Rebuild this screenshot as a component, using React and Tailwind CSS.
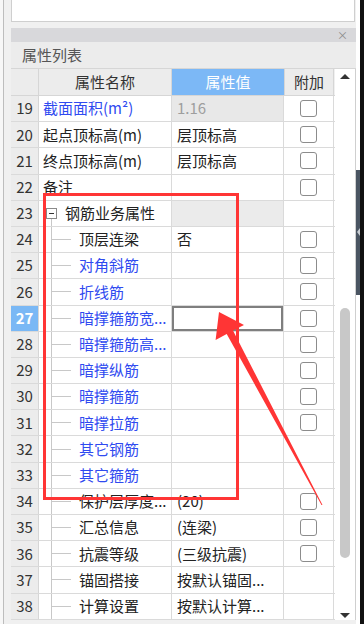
import React from "react";

const rows = [
  { n: 19, name: "截面面积(m²)", blue: true, value: "1.16", gray: true, cb: true },
  { n: 20, name: "起点顶标高(m)", value: "层顶标高", cb: true },
  { n: 21, name: "终点顶标高(m)", value: "层顶标高", cb: true },
  { n: 22, name: "备注", value: "", cb: true },
  { n: 23, name: "钢筋业务属性", group: true },
  { n: 24, name: "顶层连梁", value: "否", cb: true, child: true },
  { n: 25, name: "对角斜筋", blue: true, cb: true, child: true },
  { n: 26, name: "折线筋", blue: true, cb: true, child: true },
  { n: 27, name: "暗撑箍筋宽...", blue: true, cb: true, child: true, sel: true },
  { n: 28, name: "暗撑箍筋高...", blue: true, cb: true, child: true },
  { n: 29, name: "暗撑纵筋", blue: true, cb: true, child: true },
  { n: 30, name: "暗撑箍筋", blue: true, cb: true, child: true },
  { n: 31, name: "暗撑拉筋", blue: true, cb: true, child: true },
  { n: 32, name: "其它钢筋", blue: true, child: true },
  { n: 33, name: "其它箍筋", blue: true, child: true },
  { n: 34, name: "保护层厚度...", value: "(20)", cb: true, child: true },
  { n: 35, name: "汇总信息", value: "(连梁)", cb: true, child: true },
  { n: 36, name: "抗震等级", value: "(三级抗震)", cb: true, child: true },
  { n: 37, name: "锚固搭接", value: "按默认锚固...", child: true },
  { n: 38, name: "计算设置", value: "按默认计算...", child: true },
];

function Checkbox() {
  return <div className="w-[17px] h-[17px] rounded-[3px] border-[1.5px] border-[#8c8c8c] bg-white" />;
}

function Row({ r }) {
  const nameColor = r.blue ? "text-[#2f4af0]" : "text-[#222]";
  return (
    <div className="flex h-[26.2px] border-b border-[#dadada] bg-white">
      <div
        className={
          "w-[28px] shrink-0 flex items-center justify-center border-r border-[#d6d6d6] text-[15px] " +
          (r.sel ? "bg-[#7ab8f5] text-white font-bold" : "bg-[#ececec] text-[#333]")
        }
      >
        {r.n}
      </div>
      <div className="w-[133px] shrink-0 flex items-stretch border-r border-[#dadada] overflow-hidden whitespace-nowrap">
        {r.group ? (
          <>
            <div className="w-[7px] shrink-0" />
            <div className="w-[11px] shrink-0 flex flex-col items-center">
              <div className="flex-1" />
              <div className="w-[11px] h-[11px] border border-[#8a8a8a] flex items-center justify-center bg-white">
                <div className="w-[5px] h-px bg-[#333]" />
              </div>
              <div className="flex-1 w-px bg-[#c8c8c8]" />
            </div>
            <div className="ml-[8px] flex items-center text-[15px] text-[#222]">{r.name}</div>
          </>
        ) : r.child ? (
          <>
            <div className="w-[12px] shrink-0" />
            <div className="w-[20px] shrink-0 border-l border-[#c8c8c8] flex items-center">
              <div className="h-px w-full bg-[#c8c8c8]" />
            </div>
            <div className={"ml-[8px] flex items-center text-[15px] " + nameColor}>{r.name}</div>
          </>
        ) : (
          <div className={"pl-[4px] flex items-center text-[15px] " + nameColor}>{r.name}</div>
        )}
      </div>
      {r.sel ? (
        <div className="w-[112px] shrink-0 flex border-r border-[#dadada]">
          <div className="flex-1 border-2 border-[#7f7f7f] bg-white" />
        </div>
      ) : (
        <div
          className={
            "w-[112px] shrink-0 flex items-center pl-[5px] border-r border-[#dadada] text-[15px] whitespace-nowrap overflow-hidden " +
            (r.gray ? "bg-[#e8e8e8] text-[#9e9e9e]" : r.group ? "bg-[#ebebeb]" : "text-[#222]")
          }
        >
          {r.value}
        </div>
      )}
      <div className="w-[50px] shrink-0 flex items-center justify-center border-r border-[#dadada]">
        {r.cb ? <Checkbox /> : null}
      </div>
    </div>
  );
}

export default function App() {
  return (
    <div className="relative w-[364px] h-[624px] overflow-hidden bg-[#f0f0f0] flex font-['Noto_Sans_CJK_SC','Noto_Sans',sans-serif]">
      {/* left edge */}
      <div className="w-[3px] bg-[#f7f7f7]" />
      <div className="w-px bg-[#bdbdbd]" />
      <div className="w-[7px]" />

      {/* main column */}
      <div className="w-[345px] flex flex-col">
        <div className="h-[22px] mr-[1px] bg-white border border-t-0 border-[#cfcfcf]" />
        <div className="h-[6px]" />
        <div className="h-[14px] bg-[#d8d8db] flex items-center justify-end pr-[8px] text-[#8a8a8a] text-[11px] leading-none">
          ×
        </div>
        <div className="h-[27px] bg-[#ececec] flex items-center pl-[11px] text-[15px] text-[#555] border-b border-[#d6d6d6]">
          属性列表
        </div>
        <div className="flex">
          <div className="flex flex-col w-[324px]">
            {/* header */}
            <div className="flex h-[27px] border-b border-[#d6d6d6] text-[15px]">
              <div className="w-[28px] shrink-0 bg-[#ececec] border-r border-[#d6d6d6]" />
              <div className="w-[133px] shrink-0 bg-[#ececec] border-r border-[#d6d6d6] flex items-center justify-center text-[#333]">
                属性名称
              </div>
              <div className="w-[112px] shrink-0 bg-[#7cb8f6] flex items-center justify-center text-white">
                属性值
              </div>
              <div className="w-[50px] shrink-0 bg-[#ececec] border-l border-r border-[#d6d6d6] flex items-center justify-center text-[#333]">
                附加
              </div>
            </div>
            {rows.map((r) => (
              <Row key={r.n} r={r} />
            ))}
          </div>
          {/* scrollbar */}
          <div className="w-[21px] bg-white border-r border-[#cfcfcf] flex flex-col items-center pt-[5px]">
            <div className="w-0 h-0 border-l-[5px] border-r-[5px] border-b-[5px] border-l-transparent border-r-transparent border-b-[#333]" />
            <div className="h-[229px]" />
            <div className="w-[10px] h-[250px] rounded-full bg-[#c8c8c8]" />
            <div className="h-[55px]" />
            <div className="w-0 h-0 border-l-[5px] border-r-[5px] border-t-[5px] border-l-transparent border-r-transparent border-t-[#333]" />
          </div>
        </div>
      </div>

      {/* right edge */}
      <div className="w-[4px] flex flex-col">
        <div className="h-[170px] bg-white" />
        <div className="h-[125px] bg-[#4a5562] flex flex-col items-end justify-start pt-[58px]">
          <div className="w-0 h-0 border-t-[4px] border-b-[4px] border-r-[3px] border-t-transparent border-b-transparent border-r-[#c9ced4]" />
        </div>
        <div className="flex-1 bg-white" />
      </div>
      <div className="w-[4px] bg-[#111]" />

      {/* red annotation box */}
      <div className="absolute left-[43px] top-[193px] w-[196px] h-[307px] border-[3px] border-[#ff3535]" />
      {/* red arrow */}
      <svg className="absolute left-0 top-0" width="364" height="624" viewBox="0 0 364 624">
        <polygon
          points="219,312 244,325 233,330.6 322.5,505 321.5,505 226.7,333.9 215.6,340"
          fill="#ff3535"
        />
      </svg>
    </div>
  );
}
